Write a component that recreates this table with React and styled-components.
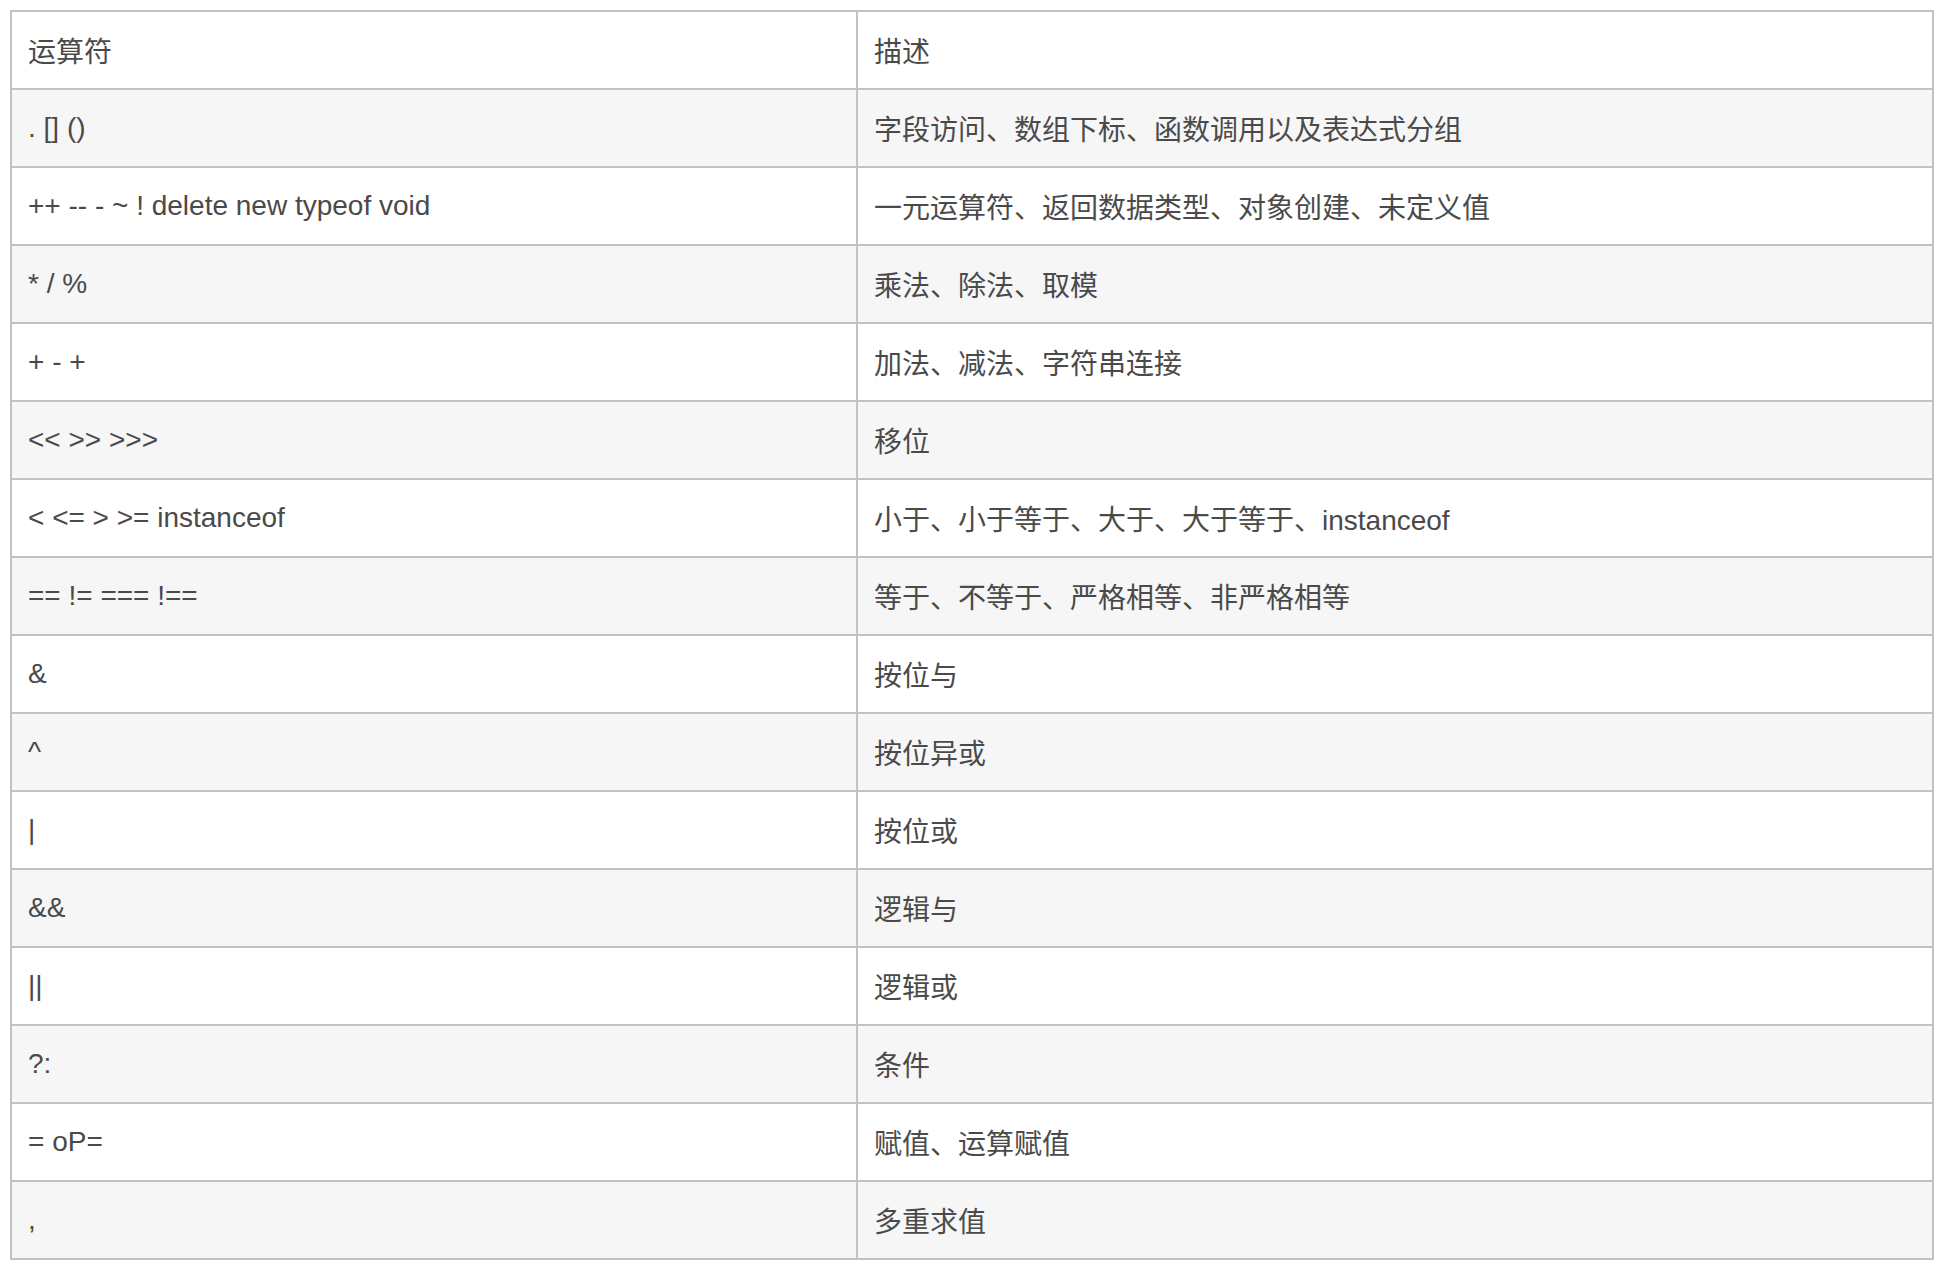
import React from 'react';
import styled, { createGlobalStyle } from 'styled-components';

const GlobalStyle = createGlobalStyle`
  body {
    margin: 0;
    background: #ffffff;
    font-family: "Liberation Sans", "Noto Sans CJK SC", sans-serif;
  }
`;

const Table = styled('table')`
  border-collapse: separate;
  border-spacing: 0;
  border-top: 2px solid #c2c2c2;
  border-left: 2px solid #c2c2c2;
  margin: 10px;
  table-layout: fixed;
  width: 1924px;
`;

const Row = styled('tr')`
  background: ${(props) => (props.$striped ? '#f6f6f6' : '#ffffff')};
`;

const Cell = styled('td')`
  border-right: 2px solid #c2c2c2;
  border-bottom: 2px solid #c2c2c2;
  color: #4a4a4a;
  font-size: 28px;
  font-weight: normal;
  height: 76px;
  padding: 0 16px;
  text-align: left;
  vertical-align: middle;
  white-space: nowrap;
`;

const HeadCell = styled(Cell).attrs({ as: 'th' })``;

const operators = [
  ['. [] ()', '字段访问、数组下标、函数调用以及表达式分组'],
  ['++ -- - ~ ! delete new typeof void', '一元运算符、返回数据类型、对象创建、未定义值'],
  ['* / %', '乘法、除法、取模'],
  ['+ - +', '加法、减法、字符串连接'],
  ['<< >> >>>', '移位'],
  ['< <= > >= instanceof', '小于、小于等于、大于、大于等于、instanceof'],
  ['== != === !==', '等于、不等于、严格相等、非严格相等'],
  ['&', '按位与'],
  ['^', '按位异或'],
  ['|', '按位或'],
  ['&&', '逻辑与'],
  ['||', '逻辑或'],
  ['?:', '条件'],
  ['= oP=', '赋值、运算赋值'],
  [',', '多重求值'],
];

const App = () => (
  <>
    <GlobalStyle />
    <Table>
      <colgroup>
        <col style={{ width: 846 }} />
        <col style={{ width: 1076 }} />
      </colgroup>
      <thead>
        <Row>
          <HeadCell>运算符</HeadCell>
          <HeadCell>描述</HeadCell>
        </Row>
      </thead>
      <tbody>
        {operators.map(([op, desc], i) => (
          <Row key={op} $striped={i % 2 === 0}>
            <Cell>{op}</Cell>
            <Cell>{desc}</Cell>
          </Row>
        ))}
      </tbody>
    </Table>
  </>
);

export default App;
